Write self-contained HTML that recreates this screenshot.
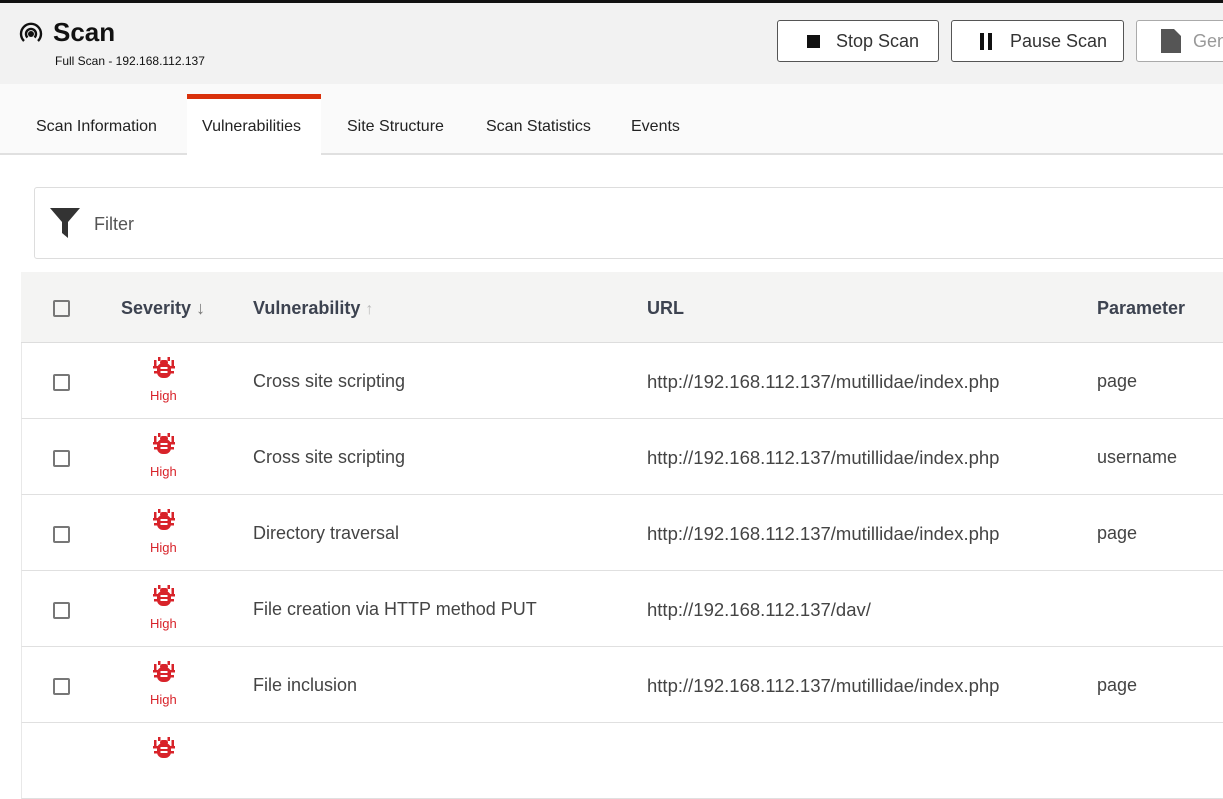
<!DOCTYPE html><html><head><style>
body{margin:0;width:1223px;height:750px;overflow:hidden;font-family:"Liberation Sans",sans-serif;background:#fff;position:relative;color:#333}
.a{position:absolute}
.hdr{left:0;top:0;width:1223px;height:84px;background:#f2f2f2;border-top:3px solid #111;box-sizing:border-box}
.btn{top:20px;height:42px;border:1px solid #555;border-radius:3px;background:#fff;box-sizing:border-box;font-size:18px;color:#333;display:flex;align-items:center}
.tabs{left:0;top:84px;width:1223px;height:71px;background:#fafafa;border-bottom:2px solid #e0e0e0;box-sizing:border-box}
.tab{top:118px;font-size:16px;color:#222}
.cb{width:17px;height:17px;border:2px solid #777;border-radius:2px;box-sizing:border-box;left:53px}
.row{left:21px;width:1202px;height:76px;border-bottom:1px solid #e0e0e0;border-left:1px solid #e8e8e8;box-sizing:border-box}
.t{font-size:18px;color:#444}
.u{font-size:18.5px}
.hi{font-size:13px;color:#d8232a;left:150px}
.bug{left:152px}
</style></head><body>
<svg width="0" height="0" style="position:absolute"><defs><symbol id="b" viewBox="0 0 24 24"><g fill="#d8232a"><rect x="5" y="7" width="14" height="15" rx="6"/><rect x="8" y="4" width="8" height="5" rx="2.5"/><rect x="6" y="1" width="2.5" height="4"/><rect x="15.5" y="1" width="2.5" height="4"/><rect x="1" y="10" width="22" height="2.5"/><rect x="2" y="15" width="20" height="2.5"/><rect x="2" y="4" width="2.5" height="7"/><rect x="19.5" y="4" width="2.5" height="7"/></g><rect x="8.5" y="11" width="7" height="2" fill="#fff"/><rect x="8.5" y="15" width="7" height="2" fill="#fff"/></symbol></defs></svg>
<div class="a hdr"></div>
<svg class="a" style="left:18px;top:21px" width="26" height="26" viewBox="0 0 26 26" fill="none" stroke="#111" stroke-width="2.4"><path d="M6 20A10 10 0 1 1 20 20"/><path d="M9.5 16.5A5 5 0 1 1 16.5 16.5"/><circle cx="13" cy="13" r="1.8" fill="#111"/></svg>
<div class="a" style="left:53px;top:17px;font-size:26px;font-weight:bold;color:#111">Scan</div>
<div class="a" style="left:55px;top:54px;font-size:12px;color:#111">Full Scan - 192.168.112.137</div>
<div class="a btn" style="left:777px;width:162px"><span style="display:inline-block;width:13px;height:13px;background:#111;margin:0 16px 0 29px"></span>Stop Scan</div>
<div class="a btn" style="left:951px;width:173px"><span style="display:inline-block;width:4px;height:17px;background:#111;margin:0 4px 0 28px"></span><span style="display:inline-block;width:4px;height:17px;background:#111;margin-right:18px"></span>Pause Scan</div>
<div class="a btn" style="left:1136px;width:120px;border-color:#aaa;color:#999"><svg style="margin:0 12px 0 24px" width="20" height="24" viewBox="0 0 20 24"><path d="M0 0H13L20 7V24H0Z" fill="#555"/></svg>Gen</div>
<div class="a tabs"></div>
<div class="a" style="left:187px;top:94px;width:134px;height:61px;background:#fff;border-top:5px solid #d9310b;box-sizing:border-box"></div>
<div class="a tab" style="left:36px">Scan Information</div>
<div class="a tab" style="left:202px">Vulnerabilities</div>
<div class="a tab" style="left:347px">Site Structure</div>
<div class="a tab" style="left:486px">Scan Statistics</div>
<div class="a tab" style="left:631px">Events</div>
<div class="a" style="left:34px;top:187px;width:1200px;height:72px;border:1px solid #ddd;border-radius:3px;box-sizing:border-box"></div>
<svg class="a" style="left:50px;top:208px" width="30" height="30" viewBox="0 0 30 30"><path d="M0 0H30L18 14V30L12 25V14Z" fill="#333"/></svg>
<div class="a" style="left:94px;top:214px;font-size:18px;color:#555">Filter</div>
<div class="a" style="left:21px;top:272px;width:1202px;height:71px;background:#f4f4f3;border-bottom:1px solid #ddd;box-sizing:border-box"></div>
<div class="a cb" style="top:300px"></div>
<div class="a" style="left:121px;top:298px;font-size:18px;font-weight:bold;color:#3d4350">Severity <span style="color:#777;font-weight:normal">↓</span></div>
<div class="a" style="left:253px;top:298px;font-size:18px;font-weight:bold;color:#3d4350">Vulnerability <span style="color:#bbb;font-weight:normal;font-size:16px">↑</span></div>
<div class="a" style="left:647px;top:298px;font-size:18px;font-weight:bold;color:#3d4350">URL</div>
<div class="a" style="left:1097px;top:298px;font-size:18px;font-weight:bold;color:#3d4350">Parameter</div>
<div class="a row" style="top:343px"></div><div class="a row" style="top:419px"></div><div class="a row" style="top:495px"></div><div class="a row" style="top:571px"></div><div class="a row" style="top:647px"></div><div class="a row" style="top:723px"></div>
<div class="a cb" style="top:374px"></div><div class="a cb" style="top:450px"></div><div class="a cb" style="top:526px"></div><div class="a cb" style="top:602px"></div><div class="a cb" style="top:678px"></div>
<svg class="a bug" style="top:356px" width="24" height="24"><use href="#b"/></svg>
<svg class="a bug" style="top:432px" width="24" height="24"><use href="#b"/></svg>
<svg class="a bug" style="top:508px" width="24" height="24"><use href="#b"/></svg>
<svg class="a bug" style="top:584px" width="24" height="24"><use href="#b"/></svg>
<svg class="a bug" style="top:660px" width="24" height="24"><use href="#b"/></svg>
<svg class="a bug" style="top:736px" width="24" height="24"><use href="#b"/></svg>
<div class="a hi" style="top:388px">High</div><div class="a hi" style="top:464px">High</div><div class="a hi" style="top:540px">High</div><div class="a hi" style="top:616px">High</div><div class="a hi" style="top:692px">High</div>
<div class="a t" style="left:253px;top:371px">Cross site scripting</div>
<div class="a t u" style="left:647px;top:371px">http://192.168.112.137/mutillidae/index.php</div>
<div class="a t" style="left:1097px;top:371px">page</div>
<div class="a t" style="left:253px;top:447px">Cross site scripting</div>
<div class="a t u" style="left:647px;top:447px">http://192.168.112.137/mutillidae/index.php</div>
<div class="a t" style="left:1097px;top:447px">username</div>
<div class="a t" style="left:253px;top:523px">Directory traversal</div>
<div class="a t u" style="left:647px;top:523px">http://192.168.112.137/mutillidae/index.php</div>
<div class="a t" style="left:1097px;top:523px">page</div>
<div class="a t" style="left:253px;top:599px">File creation via HTTP method PUT</div>
<div class="a t u" style="left:647px;top:599px">http://192.168.112.137/dav/</div>
<div class="a t" style="left:253px;top:675px">File inclusion</div>
<div class="a t u" style="left:647px;top:675px">http://192.168.112.137/mutillidae/index.php</div>
<div class="a t" style="left:1097px;top:675px">page</div>
</body></html>
